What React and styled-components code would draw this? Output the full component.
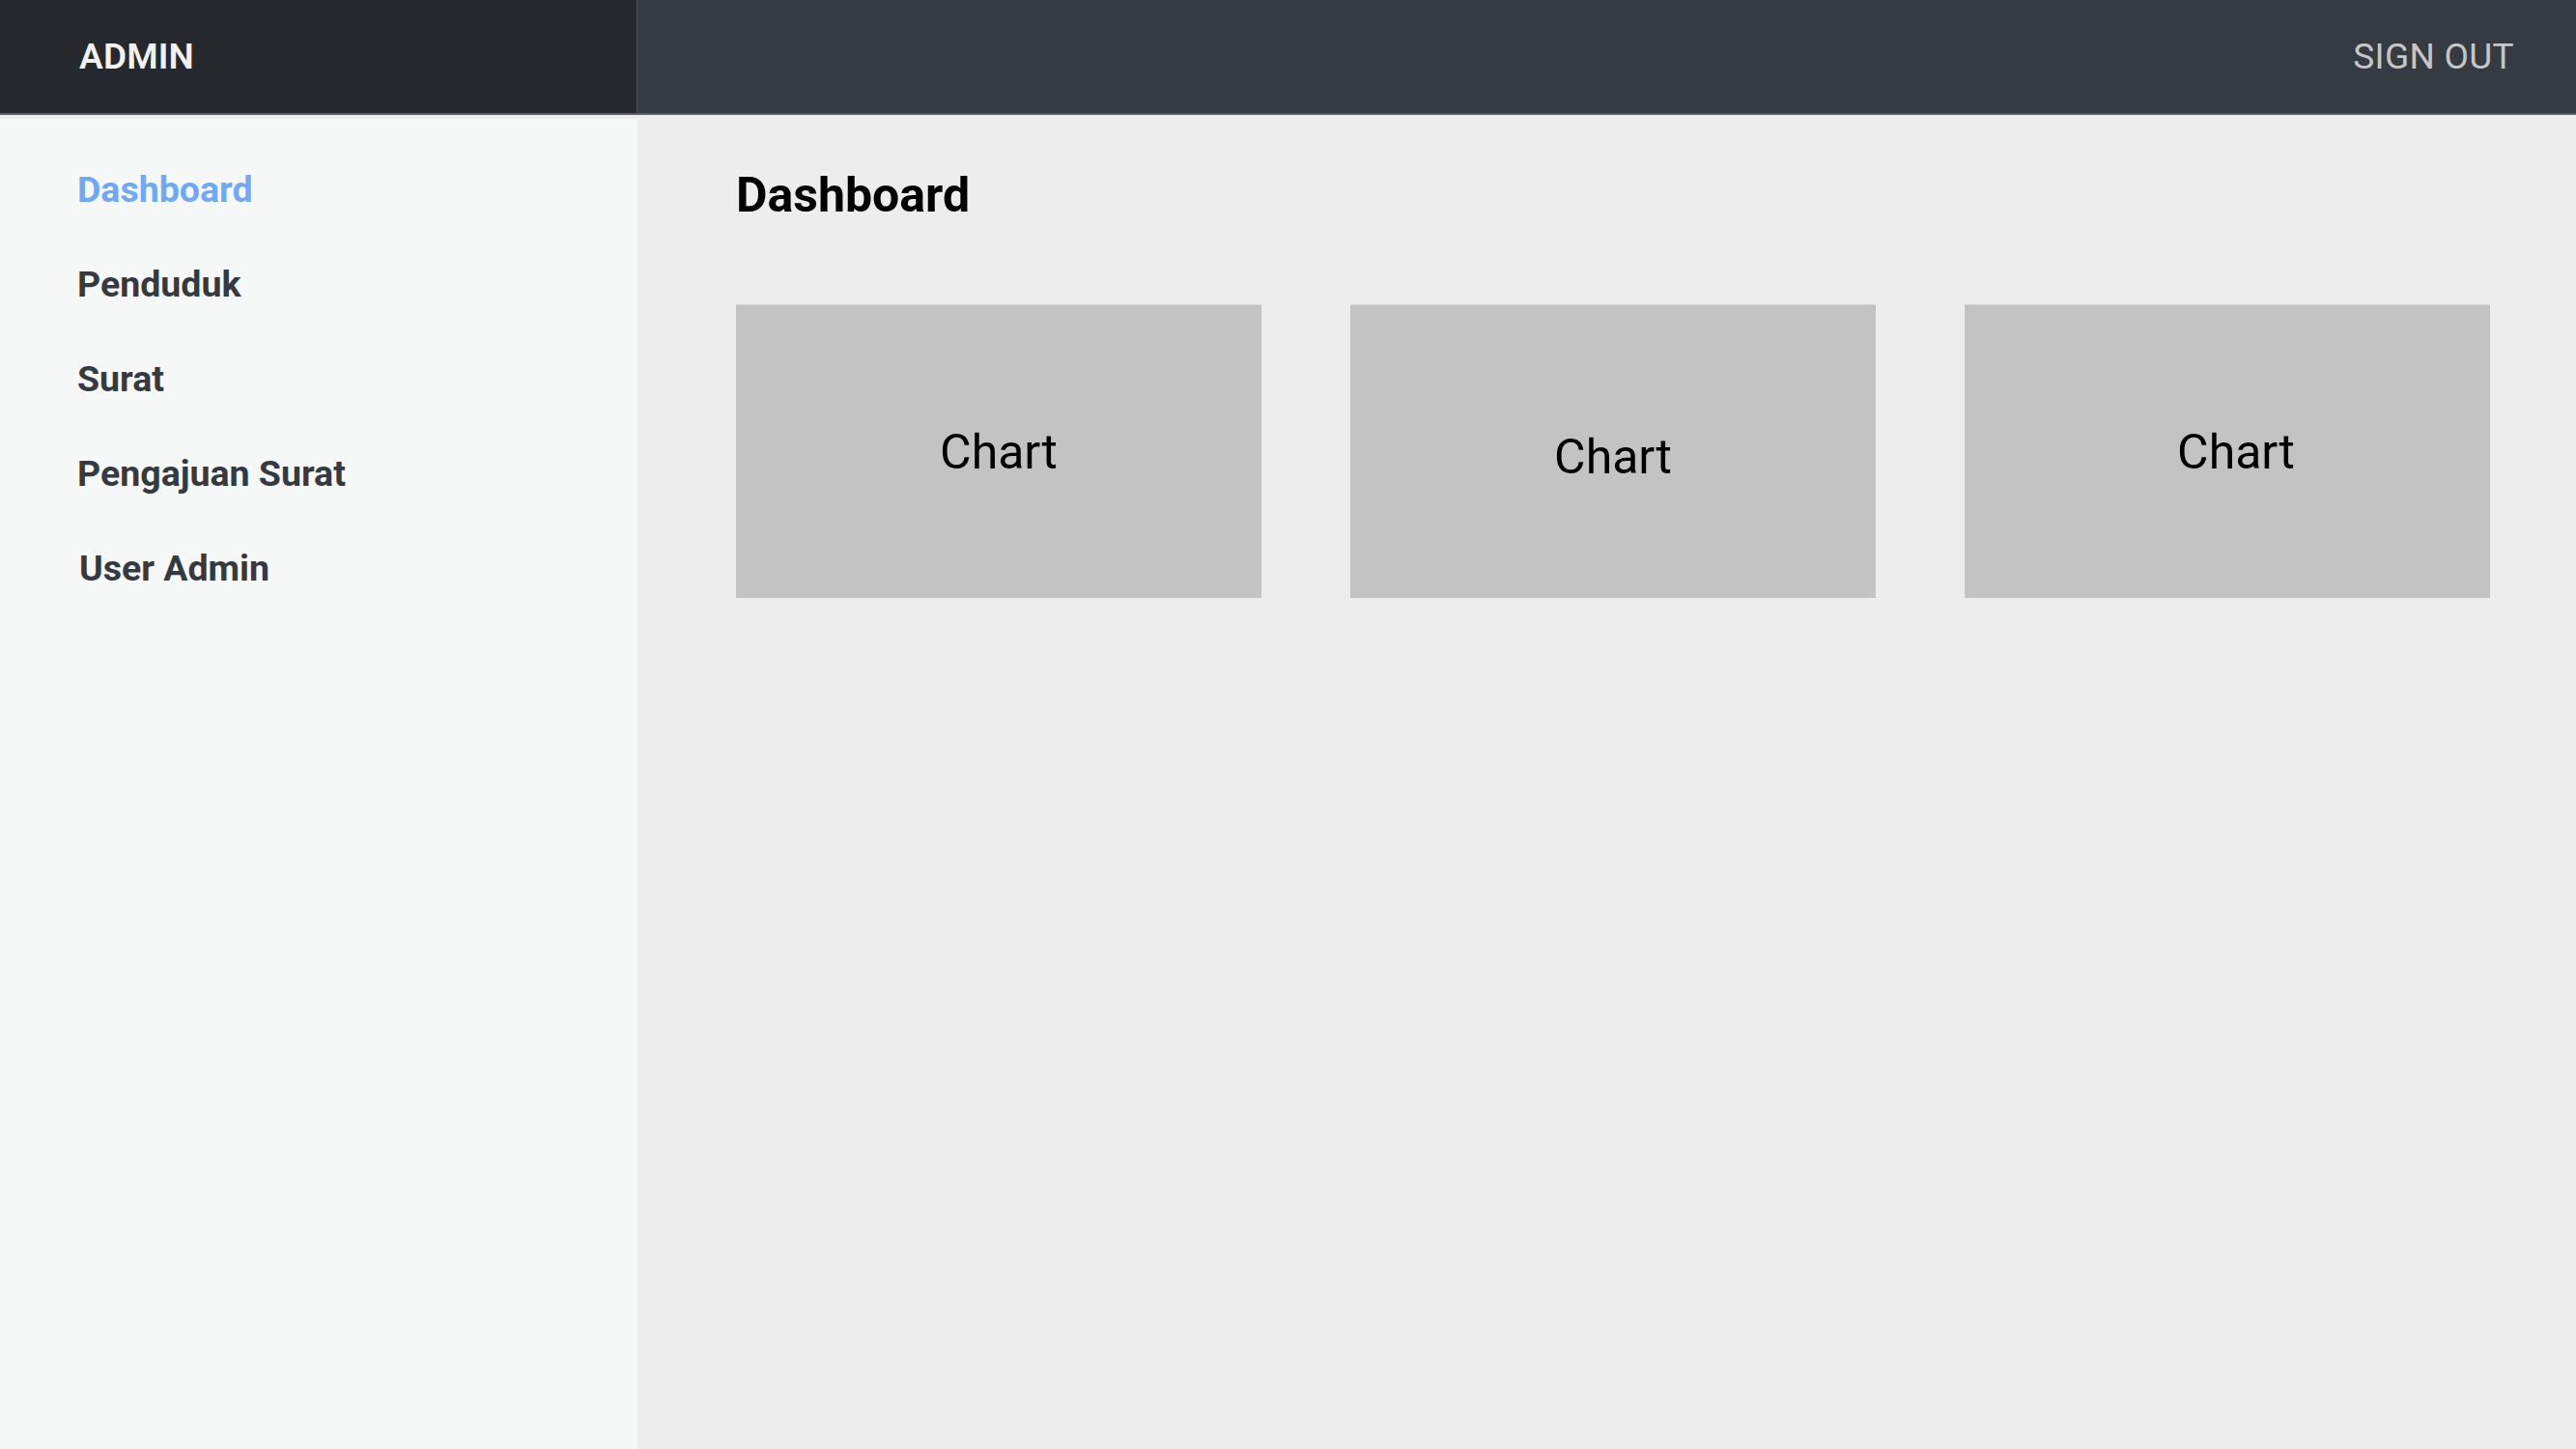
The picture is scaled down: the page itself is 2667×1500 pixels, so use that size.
import React from "react";
import styled, { createGlobalStyle } from "styled-components";

const GlobalStyle = createGlobalStyle`
    * {
        box-sizing: border-box;
    }
    body {
        margin: 0;
        font-family: Roboto, "Liberation Sans", sans-serif;
        background-color: #ededed;
    }
`;

const StyledLayout = styled.div`
    display: grid;
    grid-template-columns: 660px 1fr;
    grid-template-rows: 119px 1fr;
    height: 100vh;
    background-color: #ededed;
`;

const StyledBrand = styled.div`
    display: flex;
    align-items: center;
    padding-left: 82px;
    background-color: #25282d;
    border-right: 1px solid #4a4e55;
    border-bottom: 2px solid #5b5f65;
    color: #f1f1f1;
    font-size: 37px;
    font-weight: 600;
    letter-spacing: 0.2px;
`;

const StyledTopbar = styled.div`
    display: flex;
    align-items: center;
    justify-content: flex-end;
    padding-right: 64px;
    background-color: #363a41;
    border-bottom: 2px solid #5b5f65;
`;

const StyledSignOut = styled.a`
    color: #c6c6c6;
    font-size: 37px;
    font-weight: 400;
    letter-spacing: 0.3px;
    cursor: pointer;
`;

const StyledSidebar = styled.nav`
    display: flex;
    flex-direction: column;
    gap: 54px;
    margin-top: 4px;
    padding: 51px 0 0 80px;
    background-color: #f6f8f8;
`;

const StyledNavItem = styled.a`
    font-size: 37.5px;
    font-weight: 700;
    line-height: 44px;
    color: ${props => (props.$active ? "#6fa9f6" : "#343a40")};
    margin-left: ${props => props.$indent || 0}px;
    cursor: pointer;
`;

const StyledMain = styled.main`
    padding: 54px 89px 0 102px;
`;

const StyledTitle = styled.h1`
    margin: 0 0 84px;
    font-size: 50px;
    font-weight: 700;
    color: #000;
`;

const StyledChartRow = styled.div`
    display: grid;
    grid-template-columns: repeat(3, 544px);
    column-gap: 92px;
`;

const StyledChart = styled.div`
    height: 304px;
    display: flex;
    align-items: center;
    justify-content: center;
    padding-top: ${props => props.$nudgeY || 0}px;
    padding-left: ${props => props.$nudgeX || 0}px;
    background-color: #c3c3c3;
    border-top: 1px solid #d6d6d6;
    font-size: 50px;
    font-weight: 400;
    color: #000;
`;

const navItems = [
    { label: "Dashboard", active: true },
    { label: "Penduduk" },
    { label: "Surat" },
    { label: "Pengajuan Surat" },
    { label: "User Admin", indent: 2 },
];

const charts = [
    { id: 1 },
    { id: 2, nudgeY: 10 },
    { id: 3, nudgeX: 18 },
];

const App = () => {
    return (
        <>
            <GlobalStyle />
            <StyledLayout>
                <StyledBrand>ADMIN</StyledBrand>
                <StyledTopbar>
                    <StyledSignOut>SIGN OUT</StyledSignOut>
                </StyledTopbar>

                <StyledSidebar>
                    {navItems.map(item => (
                        <StyledNavItem key={item.label} $active={item.active} $indent={item.indent}>
                            {item.label}
                        </StyledNavItem>
                    ))}
                </StyledSidebar>

                <StyledMain>
                    <StyledTitle>Dashboard</StyledTitle>
                    <StyledChartRow>
                        {charts.map(chart => (
                            <StyledChart key={chart.id} $nudgeX={chart.nudgeX} $nudgeY={chart.nudgeY}>
                                Chart
                            </StyledChart>
                        ))}
                    </StyledChartRow>
                </StyledMain>
            </StyledLayout>
        </>
    );
};

export default App;
